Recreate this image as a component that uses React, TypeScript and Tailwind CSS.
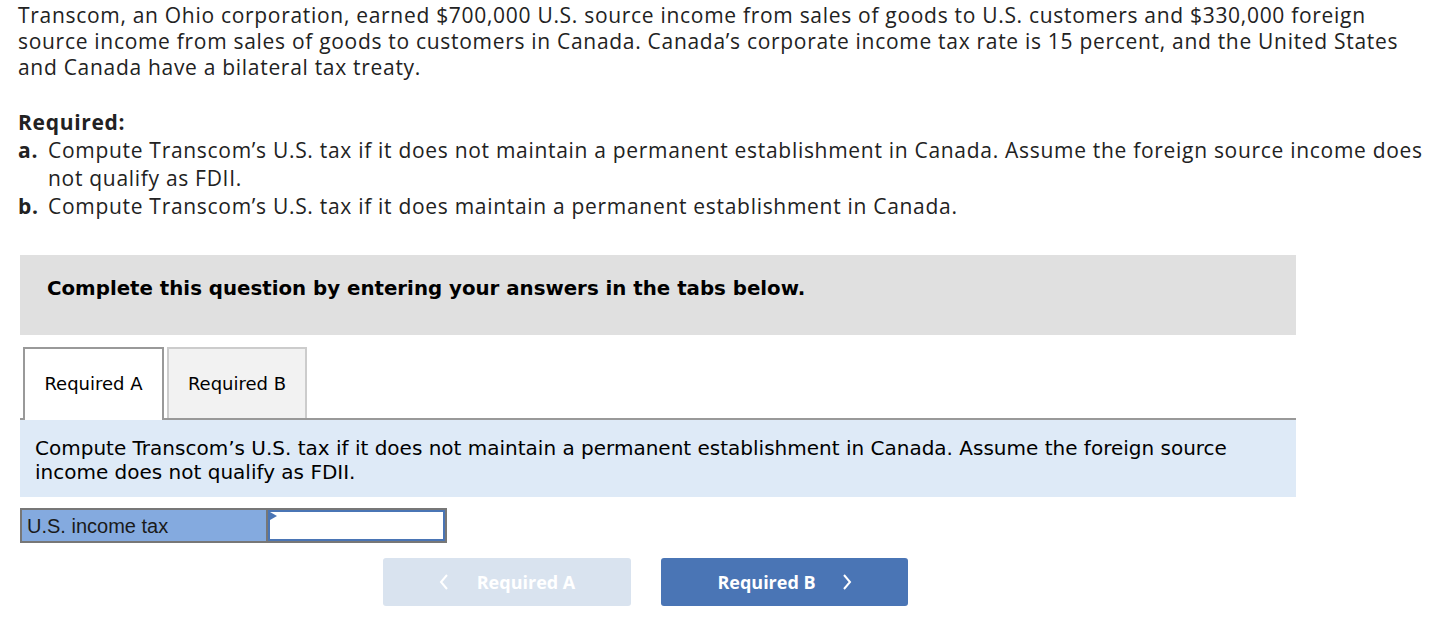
import React from "react";

export default function App() {
  return (
    <div className="w-[1454px] h-[638px] bg-white text-[#1a1a1a] overflow-hidden">
      <div className="pl-[18px] pt-[2px] font-['Open_Sans',sans-serif] text-[21px] tracking-[0.7px] leading-[26px] text-[#222] whitespace-nowrap">
        <p>
          Transcom, an Ohio corporation, earned $700,000 U.S. source income from sales of goods to U.S. customers and $330,000 foreign
          <br />
          source income from sales of goods to customers in Canada. Canada’s corporate income tax rate is 15 percent, and the United States
          <br />
          and Canada have a bilateral tax treaty.
        </p>
        <div className="mt-[28px] leading-[28px]">
          <p className="font-bold">Required:</p>
          <div className="flex">
            <span className="w-[30px] font-bold">a.</span>
            <span className="flex-1">
              Compute Transcom’s U.S. tax if it does not maintain a permanent establishment in Canada. Assume the foreign source income does
              <br />
              not qualify as FDII.
            </span>
          </div>
          <div className="flex">
            <span className="w-[30px] font-bold">b.</span>
            <span className="flex-1">Compute Transcom’s U.S. tax if it does maintain a permanent establishment in Canada.</span>
          </div>
        </div>
      </div>

      <div className="ml-[20px] w-[1276px] mt-[35px]">
        <div className="h-[80px] bg-[#e0e0e0] pl-[27px] pt-[22px] leading-[24px] font-['DejaVu_Sans',sans-serif] font-bold text-[19.8px] text-black">
          Complete this question by entering your answers in the tabs below.
        </div>

        <div className="mt-[12px] flex items-end gap-[3px] pl-[3px] border-b-2 border-[#999] font-['DejaVu_Sans',sans-serif] text-[18px] text-black">
          <div className="w-[141px] h-[73px] -mb-[2px] bg-white border-2 border-b-0 border-[#999] flex items-center justify-center pb-[2px]">
            Required A
          </div>
          <div className="w-[140px] h-[71px] bg-[#f2f2f2] border-2 border-b-0 border-[#ccc] flex items-center justify-center">
            Required B
          </div>
        </div>

        <div className="h-[77px] bg-[#deeaf7] pl-[15px] pt-[16px] font-['DejaVu_Sans',sans-serif] text-[20px] leading-[24px] text-black whitespace-nowrap">
          Compute Transcom’s U.S. tax if it does not maintain a permanent establishment in Canada. Assume the foreign source
          <br />
          income does not qualify as FDII.
        </div>

        <div className="mt-[11px] flex w-[427px] h-[35px] border-2 border-[#777] bg-[#777]">
          <div className="w-[244px] bg-[#84aadf] flex items-center pl-[5px] font-['Liberation_Sans',sans-serif] text-[20px] text-[#1a1a1a]">
            U.S. income tax
          </div>
          <div className="relative ml-[2px] flex-1 bg-white border-2 border-[#4a75b5]">
            <div className="absolute left-0 top-0 w-0 h-0 border-t-[4px] border-b-[4px] border-l-[7px] border-t-transparent border-b-transparent border-l-[#4a75b5]" />
          </div>
        </div>

        <div className="mt-[15px] flex gap-[30px] pl-[363px] font-['Open_Sans',sans-serif] font-bold text-[18px] text-white">
          <div className="w-[248px] h-[48px] rounded-[3px] bg-[#d9e3ef] flex items-center justify-center gap-[28px]">
            <svg width="10" height="16" viewBox="0 0 10 16" fill="none" stroke="white" strokeWidth="2">
              <path d="M8 1 L2 8 L8 15" />
            </svg>
            <span>Required A</span>
          </div>
          <div className="w-[247px] h-[48px] rounded-[3px] bg-[#4a75b5] flex items-center justify-center gap-[26px]">
            <span>Required B</span>
            <svg width="10" height="16" viewBox="0 0 10 16" fill="none" stroke="white" strokeWidth="2">
              <path d="M2 1 L8 8 L2 15" />
            </svg>
          </div>
        </div>
      </div>
    </div>
  );
}
